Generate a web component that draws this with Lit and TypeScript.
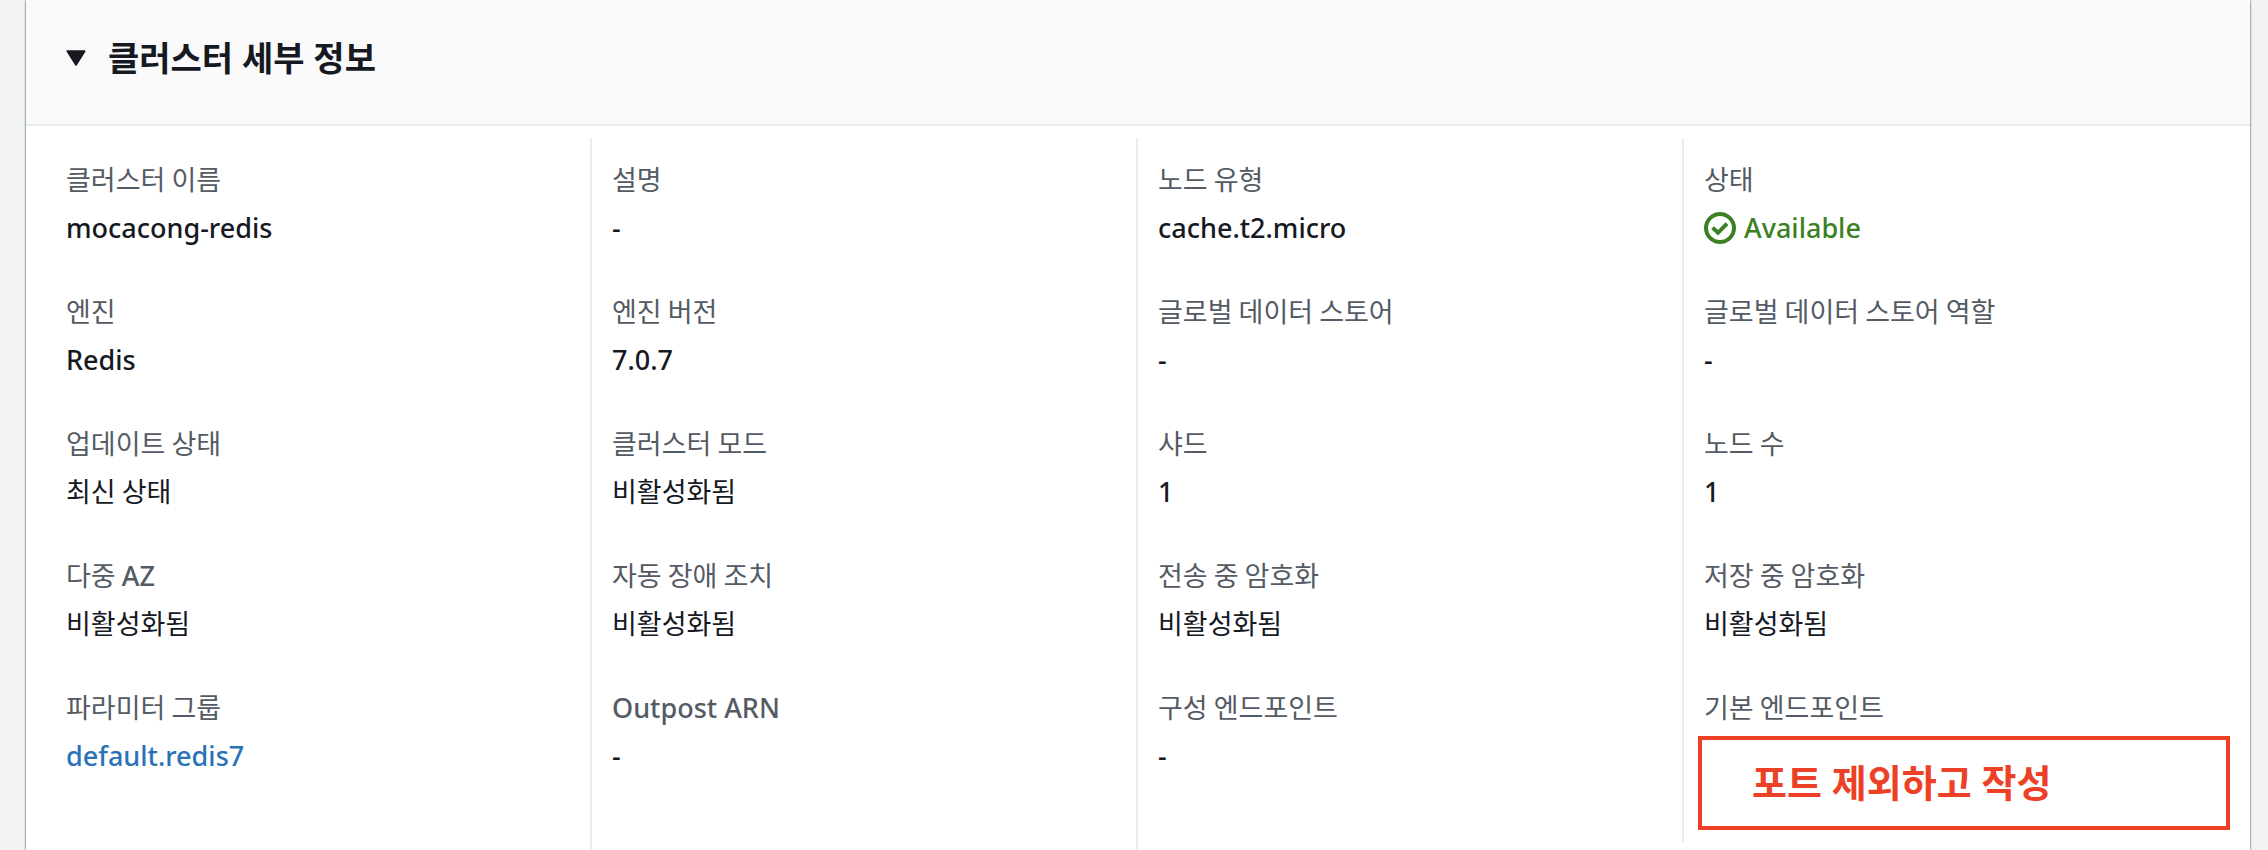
import { LitElement, html, css, svg } from "lit";
import { customElement, state } from "lit/decorators.js";

type Kind = "text" | "status" | "link" | "note";

interface Field {
  label: string;
  value: string;
  kind?: Kind;
}

const COLUMNS: Field[][] = [
  [
    { label: "클러스터 이름", value: "mocacong-redis" },
    { label: "엔진", value: "Redis" },
    { label: "업데이트 상태", value: "최신 상태" },
    { label: "다중 AZ", value: "비활성화됨" },
    { label: "파라미터 그룹", value: "default.redis7", kind: "link" },
  ],
  [
    { label: "설명", value: "-" },
    { label: "엔진 버전", value: "7.0.7" },
    { label: "클러스터 모드", value: "비활성화됨" },
    { label: "자동 장애 조치", value: "비활성화됨" },
    { label: "Outpost ARN", value: "-" },
  ],
  [
    { label: "노드 유형", value: "cache.t2.micro" },
    { label: "글로벌 데이터 스토어", value: "-" },
    { label: "샤드", value: "1" },
    { label: "전송 중 암호화", value: "비활성화됨" },
    { label: "구성 엔드포인트", value: "-" },
  ],
  [
    { label: "상태", value: "Available", kind: "status" },
    { label: "글로벌 데이터 스토어 역할", value: "-" },
    { label: "노드 수", value: "1" },
    { label: "저장 중 암호화", value: "비활성화됨" },
    { label: "기본 엔드포인트", value: "포트 제외하고 작성", kind: "note" },
  ],
];

const caret = svg`<svg class="caret" viewBox="0 0 20 16" aria-hidden="true">
  <path d="M1.5 1.2h17L10 14.8z" fill="currentColor" stroke="currentColor" stroke-width="2" stroke-linejoin="round" /></svg>`;

const check = svg`<svg class="check" viewBox="0 0 32 32" aria-hidden="true" fill="none" stroke="currentColor" stroke-width="4">
  <circle cx="16" cy="16" r="14" />
  <path d="M8.6 15.6l5.4 5.2 9-9.2" /></svg>`;

/** Splits a string into Hangul and Latin runs, each set in its own face. */
const text = (value: string) =>
  html`<span>${(value.match(/[A-Za-z0-9.\-]+(?: [A-Za-z0-9.\-]+)*|[^A-Za-z0-9.\-]+/g) ?? []).map(
    (run) => html`<span class=${/[가-힣]/.test(run) ? "hangul" : "latin"}>${run}</span>`
  )}</span>`;

@customElement("app-root")
export class AppRoot extends LitElement {
  @state() private open = true;

  static styles = css`
    :host {
      display: flex;
      box-sizing: border-box;
      height: 100vh;
      overflow: hidden;
      padding: 0 18px 0 26px;
      background: #f2f4f4;
      color: #16191f;
      font-family: "Noto Sans", "Noto Sans CJK KR", sans-serif;
      font-size: 27px;
      line-height: 44px;
    }
    .panel {
      flex: 1;
      min-width: 0;
      display: flex;
      flex-direction: column;
      background: #fff;
      box-shadow: 0 0 2px rgba(0, 28, 36, 0.7), 0 2px 2px rgba(0, 28, 36, 0.3);
    }
    .header {
      padding: 36px 40px 44px;
      background: #fafafa;
      border-bottom: 2px solid #eaeded;
    }
    .title {
      margin: 0;
      font: inherit;
    }
    .toggle {
      display: flex;
      align-items: center;
      gap: 22px;
      padding: 0;
      border: 0;
      background: none;
      color: inherit;
      font: inherit;
      font-size: 34px;
      font-weight: 700;
      cursor: pointer;
    }
    .caret {
      width: 20px;
      height: 16px;
    }
    .grid {
      flex: 1;
      display: grid;
      grid-template-columns: repeat(4, minmax(0, 1fr));
      padding: 12px 20px 0;
    }
    .column {
      margin: 0;
      padding: 20px 20px 0;
      border-right: 2px solid #eaeded;
    }
    .column:nth-child(3) {
      margin-bottom: 8px;
    }
    .column:last-child {
      padding-right: 0;
      border-right: 0;
    }
    .field + .field {
      margin-top: 40px;
    }
    .label {
      color: #545b64;
    }
    .value {
      margin: 4px 0 0;
    }
    .latin {
      font-weight: 500;
    }
    .hangul {
      font-family: "Noto Sans CJK KR", sans-serif;
      line-height: 1;
    }
    .status {
      display: flex;
      align-items: center;
      gap: 8px;
      color: #3b8124;
    }
    .check {
      width: 32px;
      height: 32px;
    }
    .link {
      color: #2a72b8;
      text-decoration: none;
    }
    .note {
      margin: 6px 0 0 -6px;
      padding: 20px 50px 22px;
      border: 4px solid #ec4126;
      color: #ec4126;
      font-size: 38px;
      font-weight: 700;
    }
  `;

  private renderValue(field: Field) {
    switch (field.kind) {
      case "status":
        return html`<dd class="value status">${check}${text(field.value)}</dd>`;
      case "link":
        return html`<dd class="value"><a class="link" href="#parameter-group">${text(field.value)}</a></dd>`;
      case "note":
        return html`<dd class="value note">${field.value}</dd>`;
      default:
        return html`<dd class="value">${text(field.value)}</dd>`;
    }
  }

  render() {
    return html`
      <section class="panel">
        <header class="header">
          <h2 class="title">
            <button class="toggle" aria-expanded=${this.open} @click=${() => (this.open = !this.open)}>
              ${caret}<span>클러스터 세부 정보</span>
            </button>
          </h2>
        </header>
        ${this.open
          ? html`<div class="grid">
              ${COLUMNS.map(
                (column) => html`<dl class="column">
                  ${column.map(
                    (field) => html`<div class="field">
                      <dt class="label">${text(field.label)}</dt>
                      ${this.renderValue(field)}
                    </div>`
                  )}
                </dl>`
              )}
            </div>`
          : null}
      </section>
    `;
  }
}
